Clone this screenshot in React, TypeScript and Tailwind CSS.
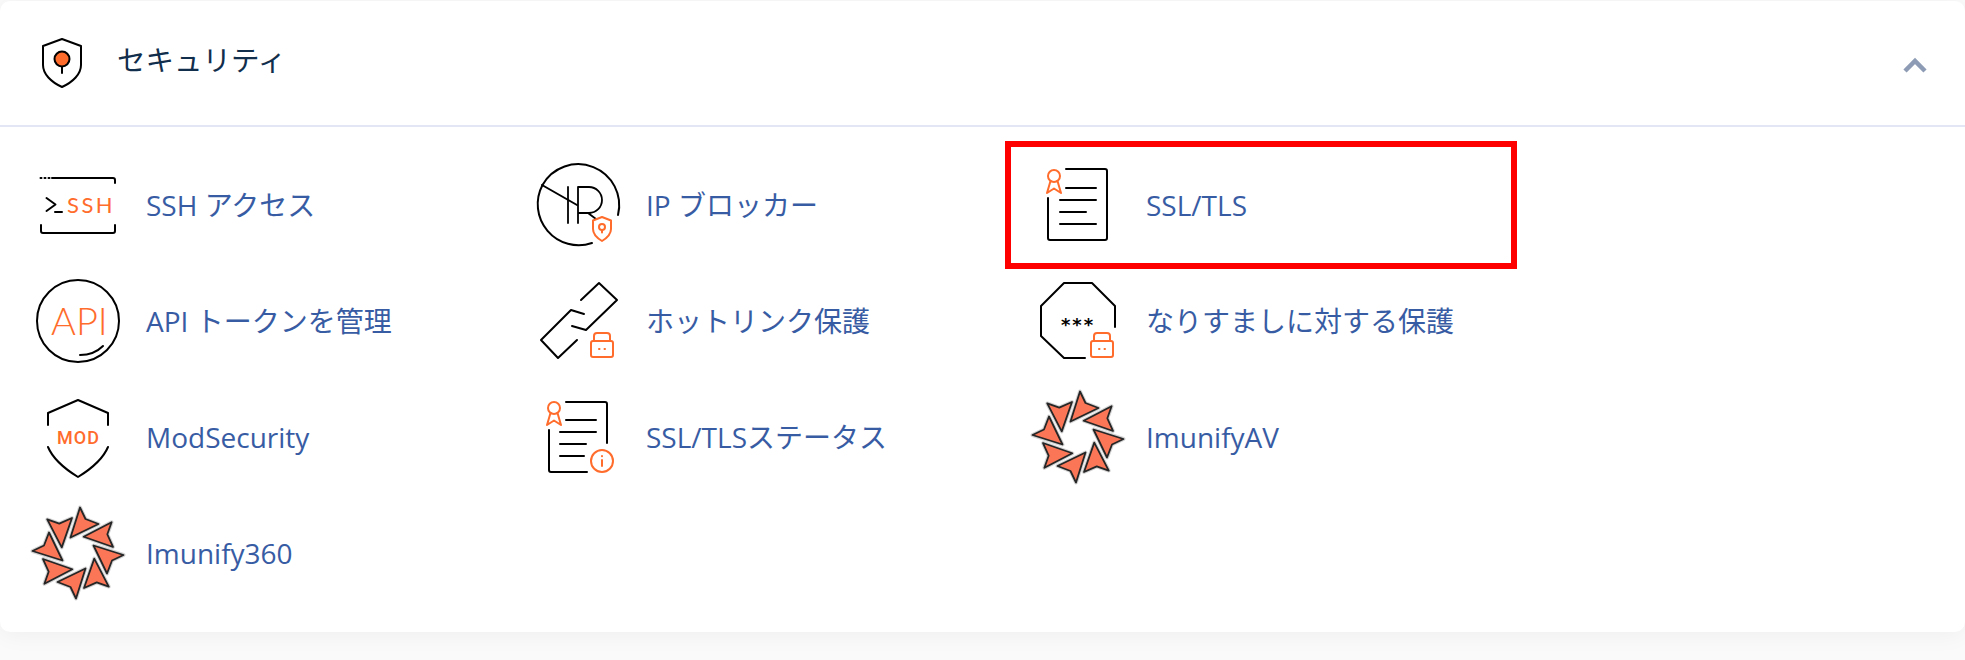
import type { ReactNode } from 'react';

const ORANGE = '#ff6c2c';

function IconBox({ children }: { children: ReactNode }) {
    return (
        <svg
            width="96"
            height="96"
            viewBox="0 0 96 96"
            fill="none"
            stroke="#000"
            strokeWidth="2"
            strokeLinecap="round"
            strokeLinejoin="round"
            className="shrink-0"
        >
            {children}
        </svg>
    );
}

function SshIcon() {
    return (
        <IconBox>
            <path d="M22 21h61a2 2 0 0 1 2 2v3M11 68v6a2 2 0 0 0 2 2h70a2 2 0 0 0 2-2v-6" />
            <path d="M10.500 21h1M14.500 21h1M18.500 21h1" />
            <path d="M16.500 41l9 6.500-9 6.500M25 55h7" />
            <text x="37" y="56" fill={ORANGE} stroke="none" fontFamily="Lato, sans-serif" fontSize="22" letterSpacing="2.500">SSH</text>
        </IconBox>
    );
}

function IpIcon() {
    return (
        <IconBox>
            <path d="M62 86A41 41 0 0 1 12.500 28M12.500 28A41 41 0 0 1 88 58" />
            <path d="M12 28l35 20" />
            <path d="M38 30v36M48 66V30h11a13 13 0 0 1 0 26H48M58 56l8 6" strokeWidth="1.800" />
            <path d="M72 60l9 3.500v8.500c0 5-4 9-9 12-5-3-9-7-9-12v-8.500z" stroke={ORANGE} />
            <circle cx="72" cy="70" r="3" stroke={ORANGE} />
            <path d="M72 73v2.500" stroke={ORANGE} />
        </IconBox>
    );
}

function CertIcon({ info }: { info?: boolean }) {
    return (
        <IconBox>
            {info ? (
                <path d="M36 13h39a2 2 0 0 1 2 2v39M19 41v40a2 2 0 0 0 2 2h36" />
            ) : (
                <path d="M36 12h39a2 2 0 0 1 2 2v67a2 2 0 0 1-2 2H20a2 2 0 0 1-2-2V41" />
            )}
            <path d="M36 31h30M30 43h36M30 55h26" />
            <path d={info ? 'M30 67h24' : 'M30 67h36'} />
            <circle cx="24" cy="19" r="6" stroke={ORANGE} />
            <path d="M20.500 24l-3.500 12 7-4.500 7 4.500-3.500-12" stroke={ORANGE} />
            {info && (
                <g stroke={ORANGE}>
                    <circle cx="72" cy="72" r="11" />
                    <path d="M72 71v6M72 67v.2" />
                </g>
            )}
        </IconBox>
    );
}

function Lock({ x }: { x: number }) {
    return (
        <g stroke={ORANGE} transform={`translate(${x} 0)`}>
            <rect x="0" y="68" width="22" height="16" rx="2" />
            <path d="M3 68v-5a3 3 0 0 1 3-3h10a3 3 0 0 1 3 3v5" />
            <path d="M8 76h.5M13.500 76h.5" />
        </g>
    );
}

function ChainIcon() {
    return (
        <IconBox>
            <path d="M51 27l18-17 18 17-31 30-14-4" />
            <path d="M54 41l-13-4-30 30 17 18 19-18" />
            <Lock x={61} />
        </IconBox>
    );
}

function ApiIcon() {
    return (
        <IconBox>
            <circle cx="48" cy="48" r="41" />
            <path d="M50 82c9 0 17-3 23-9" />
            <text x="21" y="62" fill={ORANGE} stroke="none" fontFamily="Lato, sans-serif" fontWeight="300" fontSize="38">API</text>
        </IconBox>
    );
}

function OctagonIcon() {
    return (
        <IconBox>
            <path d="M55 85H34L11 63V33l23-23h28l23 23v21" />
            <text x="48" y="58" textAnchor="middle" fill="#000" stroke="none" fontFamily="'DejaVu Sans', sans-serif" fontWeight="700" fontSize="18" letterSpacing="2">***</text>
            <Lock x={61} />
        </IconBox>
    );
}

function ModIcon() {
    return (
        <IconBox>
            <path d="M18 36V24l30-13 30 13v12" />
            <path d="M18 58c5 12 17 22 30 30 13-8 25-18 30-30" />
            <text x="48.500" y="54.500" textAnchor="middle" fill={ORANGE} stroke="none" fontFamily="Roboto, sans-serif" fontWeight="500" fontSize="18" letterSpacing="1">MOD</text>
        </IconBox>
    );
}

function ImunifyIcon() {
    const blades = [0, 45, 90, 135, 180, 225, 270, 315];
    return (
        <svg width="96" height="96" viewBox="0 0 96 96" className="shrink-0 blur-[0.5px]">
            {blades.map((deg) => (
                <g key={deg} transform={`rotate(${deg} 48 48)`} strokeLinejoin="round">
                    <polygon points="50,2.500 55.500,14 68.500,19 40.500,32.500" fill="none" stroke="#d4d4d4" strokeWidth="4" />
                    <polygon points="50,2.500 55.500,14 68.500,19 40.500,32.500" fill="#fb7656" stroke="#262626" strokeWidth="1.800" />
                </g>
            ))}
        </svg>
    );
}

const items = [
    { label: 'SSH アクセス', icon: <SshIcon /> },
    { label: 'IP ブロッカー', icon: <IpIcon /> },
    { label: 'SSL/TLS', icon: <CertIcon />, marked: true },
    { label: 'API トークンを管理', icon: <ApiIcon /> },
    { label: 'ホットリンク保護', icon: <ChainIcon /> },
    { label: 'なりすましに対する保護', icon: <OctagonIcon /> },
    { label: 'ModSecurity', icon: <ModIcon /> },
    { label: 'SSL/TLSステータス', icon: <CertIcon info /> },
    { label: 'ImunifyAV', icon: <ImunifyIcon /> },
    { label: 'Imunify360', icon: <ImunifyIcon /> },
];

export default function App() {
    return (
        <div className="h-[660px] overflow-hidden bg-[#fafafa] pt-px font-['Open_Sans','Noto_Sans_CJK_JP',sans-serif]">
            <div className="h-[631px] rounded-[10px] bg-white shadow-[0_2px_24px_rgba(0,0,0,0.05)]">
                {/* Header */}
                <div className="flex h-[126px] items-center border-b-2 border-[#e3e7f5] pl-[41px] pr-[38px]">
                    <svg width="42" height="50" viewBox="0 0 42 50" fill="none" stroke="#000" strokeWidth="2" strokeLinecap="round" strokeLinejoin="round">
                        <path d="M21 1l19 7v19c0 9-8 17-19 22C10 44 2 36 2 27V8z" />
                        <circle cx="21" cy="21" r="7.500" fill={ORANGE} />
                        <path d="M21 29v6" />
                    </svg>
                    <h2 className="ml-[34px] flex-1 pb-[6px] text-[28.500px] leading-none font-normal text-[#112e4c]">セキュリティ</h2>
                    <svg width="24" height="16" viewBox="0 0 24 16" fill="none" stroke="#8d9bb5" strokeWidth="4.500" className="mt-[3px]">
                        <path d="M2 14L12 4l10 10" />
                    </svg>
                </div>

                {/* Items */}
                <div className="grid grid-cols-[500px_500px_500px] auto-rows-[116px] pl-[30px] pt-[20px]">
                    {items.map((item) => (
                        <div key={item.label} className="relative flex items-center gap-[20px]">
                            {item.icon}
                            <span className="text-[28px] leading-none text-[#385ca4]">{item.label}</span>
                            {item.marked && (
                                <div className="absolute -left-[25px] -top-[6px] h-[128px] w-[512px] border-[6px] border-[#ff0000]" />
                            )}
                        </div>
                    ))}
                </div>
            </div>
        </div>
    );
}
